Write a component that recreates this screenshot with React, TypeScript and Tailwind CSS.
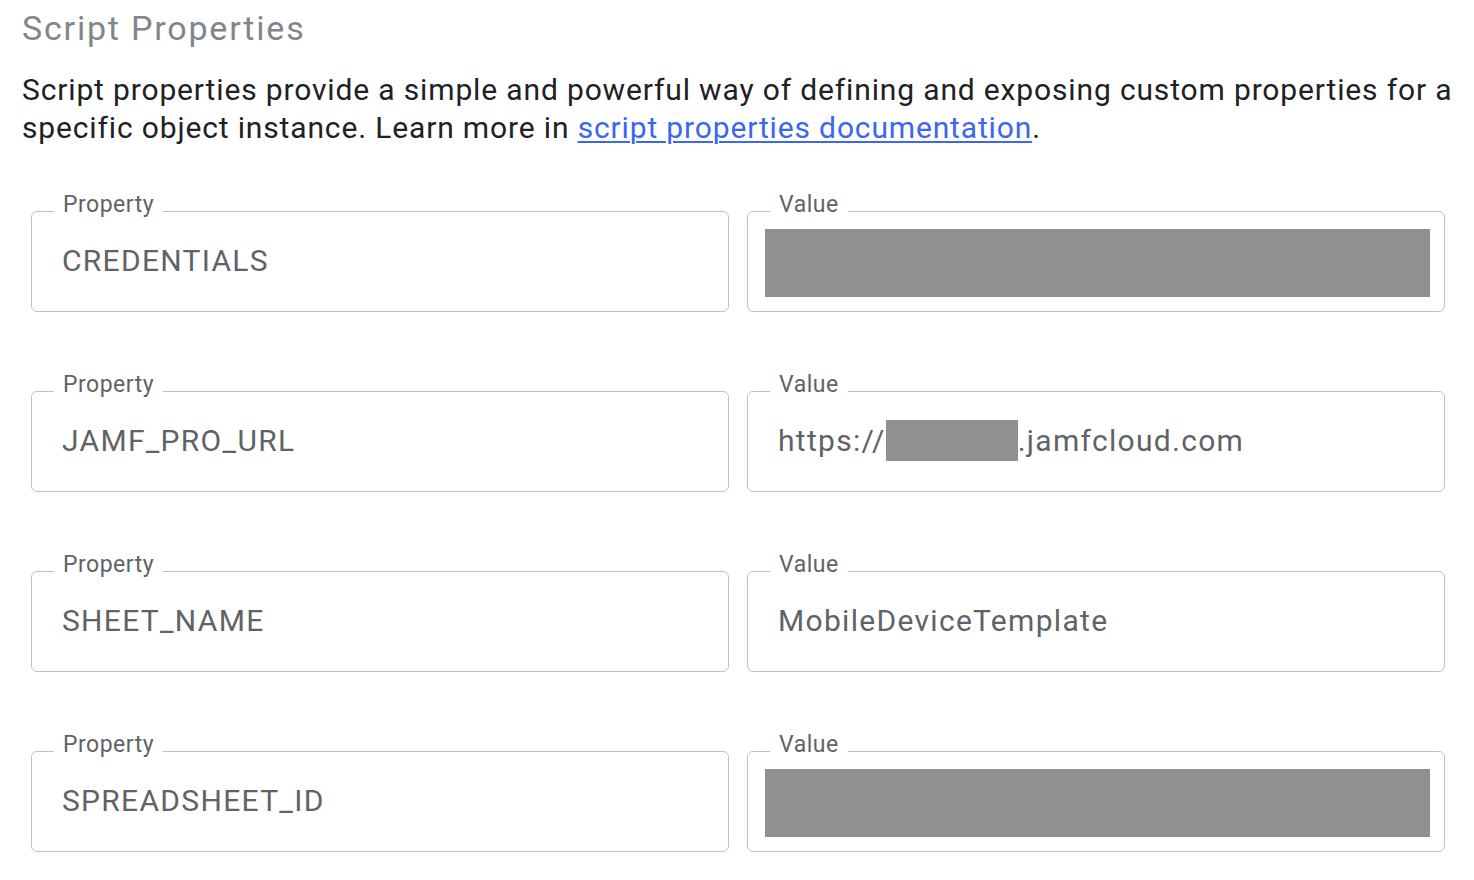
const ROWS: { property: string; value: React.ReactNode; redacted?: boolean }[] = [
  { property: 'CREDENTIALS', value: null, redacted: true },
  {
    property: 'JAMF_PRO_URL',
    value: (
      <>
        https://
        <span className="inline-block w-[132px] h-[41px] bg-[#909090]" />
        .jamfcloud.com
      </>
    ),
  },
  { property: 'SHEET_NAME', value: 'MobileDeviceTemplate' },
  { property: 'SPREADSHEET_ID', value: null, redacted: true },
];

export default function App() {
  return (
    <div className="min-h-screen bg-white font-['Roboto','Liberation_Sans',sans-serif]">
      <div className="pl-[22px] pt-[8px]">
        <h1 className="text-[34px] leading-[40px] font-normal tracking-[1.8px] text-[#80868b]">Script Properties</h1>
        <p className="mt-[23px] w-[1445px] text-[30px] leading-[38px] tracking-[0.85px] text-[#202124]">
          Script properties provide a simple and powerful way of defining and exposing custom properties for a
          specific object instance. Learn more in{' '}
          <a href="#" className="text-[#3a66f0] underline decoration-2 underline-offset-[3px]">
            script properties documentation
          </a>
          .
        </p>
      </div>

      {/* Property / value pairs */}
      <div className="pl-[31px] pr-[29px] mt-[64px] flex flex-col gap-[79px]">
        {ROWS.map(row => (
          <div key={row.property} className="grid grid-cols-2 gap-[18px]">
            <Field label="Property">
              <span className="pl-[30px] pb-[2px]">{row.property}</span>
            </Field>
            <Field label="Value">
              {row.redacted ? (
                <div className="self-start mt-[17px] mx-[17px] mr-[14px] flex-1 h-[68px] bg-[#909090]" />
              ) : (
                <span className="pl-[30px] pb-[2px] flex items-center">{row.value}</span>
              )}
            </Field>
          </div>
        ))}
      </div>
    </div>
  );
}

function Field({ label, children }: { label: string; children: React.ReactNode }) {
  return (
    <div className="relative h-[101px] rounded-[6px] border border-[#bdc1c6] flex items-center text-[30px] tracking-[1.3px] text-[#5f6368]">
      <span className="absolute left-[22px] top-[-24px] bg-white px-[9px] text-[23px] leading-[34px] tracking-[0.5px] text-[#5f6368]">
        {label}
      </span>
      {children}
    </div>
  );
}
